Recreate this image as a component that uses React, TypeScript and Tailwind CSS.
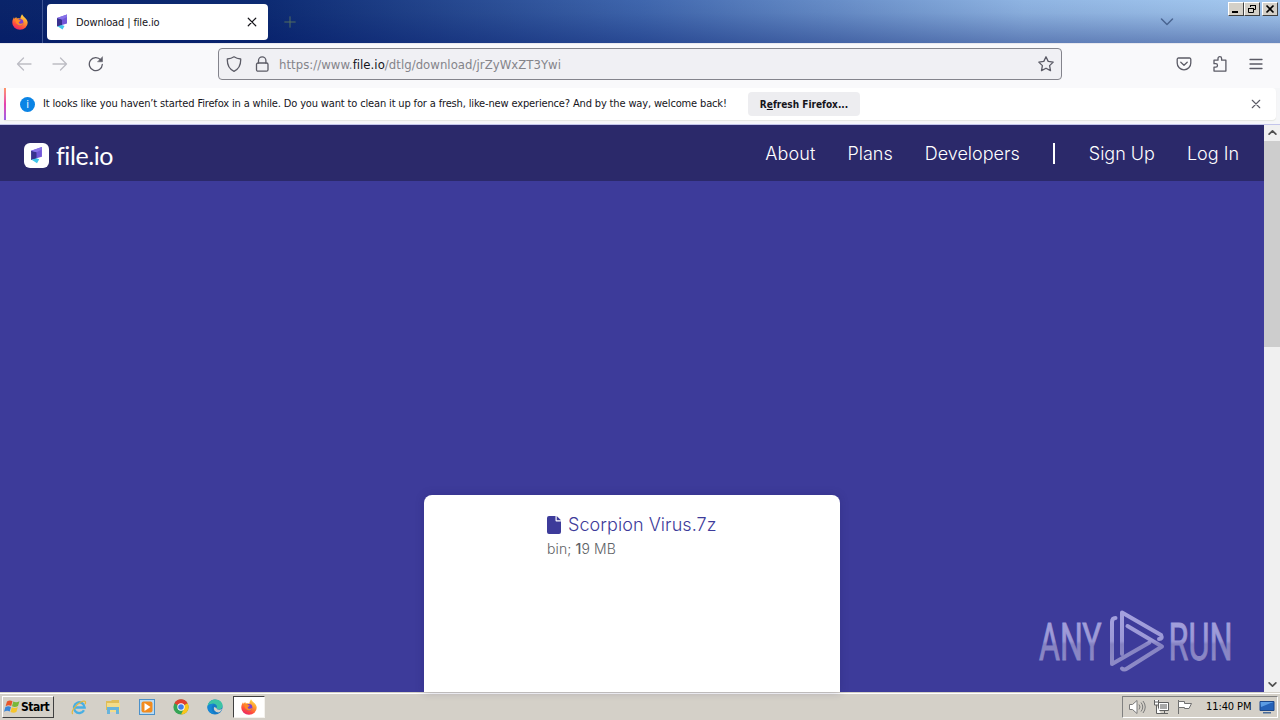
import type { ReactNode } from "react";

function FirefoxIcon({ size = 16 }: { size?: number }) {
  return (
    <svg width={size} height={size} viewBox="0 0 16 16">
      <defs>
        <linearGradient id="fox" x1="0.8" y1="0" x2="0.3" y2="1">
          <stop offset="0" stopColor="#ffe14d" />
          <stop offset="0.4" stopColor="#ff9a2e" />
          <stop offset="0.75" stopColor="#ff4a3d" />
          <stop offset="1" stopColor="#e5246f" />
        </linearGradient>
      </defs>
      <path d="M10 .3c.8 1 1.2 2 2.4 3 1.800 1.400 3.300 3.300 3.300 5.500A7.700 7 0 0 1 8 15.800 7.700 7 0 0 1 .3 8.700C.3 6.500 1 4.800 2 3.300l.5 1.500L4.200 3l.6 1.500c1.200-.4 2.400-.4 3.400.2C8.500 3 9.200 1.600 10 .3z" fill="url(#fox)" />
      <circle cx="8" cy="8.400" r="3.300" fill="#7a3fd0" />
      <path d="M3.500 5.500c1.300-.8 2.800-.6 3.800.5l1.500.4c-.3.900-1.500 1-2 1.500-.2 1 .7 1.900 2 1.800 1-.1 1.700-.6 2.500-.2-.9 1.700-2.700 2.300-4.300 1.900C4.500 10.800 3.200 8.300 3.500 5.500z" fill="#ff8a25" />
    </svg>
  );
}

function FileMark({ className }: { className: string }) {
  return (
    <svg className={className} viewBox="0 0 12 16">
      <path d="M1 4 11 .5V9.500L6 11z" fill="#7257d8" />
      <path d="M1 4 6 5.500v6L1 12.500z" fill="#39328f" />
      <path d="M1 4 11 .5V3L6 5.500z" fill="#8672e8" />
      <path d="M1.500 12.300 6 11l2.500 1L6.500 15.500z" fill="#3fc6ea" />
    </svg>
  );
}

function LineIcon({ children, className = "size-4 text-[#5b5b66]" }: { children: ReactNode; className?: string }) {
  return (
    <svg className={className} viewBox="0 0 16 16" fill="none" stroke="currentColor" strokeWidth="1.3" strokeLinecap="round" strokeLinejoin="round">
      {children}
    </svg>
  );
}

function WindowButton({ children }: { children: ReactNode }) {
  return (
    <div className="flex h-[14px] w-4 items-center justify-center border border-t-white border-r-[#404040] border-b-[#404040] border-l-white bg-[#d4d0c8]">
      <svg width="12" height="10" viewBox="0 0 12 10" fill="none" stroke="#000">
        {children}
      </svg>
    </div>
  );
}

function TabStrip() {
  return (
    <div className="flex h-[43px] bg-[linear-gradient(to_bottom,rgba(0,0,0,0)_0%,rgba(0,20,80,0.05)_30%,rgba(0,20,100,0.35)_100%),linear-gradient(to_right,#0a246a_0%,#0d2b73_21%,#3f66ad_50%,#8fb4e2_80%,#a6caf0_100%)]">
      <div className="flex w-[43px] items-center justify-center border-r border-[#3f5694] pr-[2px]">
        <FirefoxIcon />
      </div>
      <div className="mt-1 ml-1 flex h-9 w-[221px] items-center rounded bg-white pr-[11px] pl-[9px]">
        <FileMark className="h-4 w-3" />
        <span className="mt-[2px] ml-2 flex-1 text-[11px] tracking-[-0.13px] whitespace-nowrap text-[#15141a]">Download | file.io</span>
        <LineIcon className="size-[10px] text-[#15141a]">
          <path d="M2 2l12 12M14 2 2 14" strokeWidth="1.9" />
        </LineIcon>
      </div>
      <div className="flex flex-1 items-center pl-4">
        <LineIcon className="size-[12px] text-[#55705f]">
          <path d="M8 1v14M1 8h14" />
        </LineIcon>
      </div>
      <LineIcon className="mt-[14px] mr-[53px] size-4 text-[#4a6591]">
        <path d="M2.500 5 8 10.500 13.500 5" strokeWidth="1.500" />
      </LineIcon>
      <div className="mt-[2px] mr-[2px] flex">
        <WindowButton>
          <path d="M2 8h6" strokeWidth="2" />
        </WindowButton>
        <WindowButton>
          <path d="M4.500 3V1.500h5v4H8M4 1.500h6" />
          <path d="M2.500 4.500h5v4h-5zM2 4.500h6" />
        </WindowButton>
        <div className="ml-[2px]">
          <WindowButton>
            <path d="M2.500 1.500l7 7M9.500 1.500l-7 7" strokeWidth="1.700" />
          </WindowButton>
        </div>
      </div>
    </div>
  );
}

function Toolbar() {
  return (
    <div className="flex h-[45px] items-center border-t border-[#e8e8ee] bg-[#f9f9fb] pr-4 pb-1 pl-4">
      <LineIcon className="size-4 text-[#bdbdc4]">
        <path d="M15 8H1.500M7.500 2 1.500 8l6 6" />
      </LineIcon>
      <LineIcon className="ml-5 size-4 text-[#bdbdc4]">
        <path d="M1 8h13.500M8.500 2l6 6-6 6" />
      </LineIcon>
      <LineIcon className="ml-5 size-4 text-[#5b5b66]">
        <path d="M14.300 8.500A6.500 6.500 0 1 1 12.800 4" />
        <path d="M14.500 1v4.800H9.800z" fill="currentColor" strokeWidth="0.500" />
      </LineIcon>
      <div className="ml-[114px] flex h-8 w-[844px] items-center rounded border border-[#84848c] bg-[#f0f0f4] px-[7px]">
        <LineIcon>
          <path d="M8 .8c2 1.400 4.200 2 6.700 2.200C14.900 8.500 13.200 13 8 15.300 2.800 13 1.100 8.500 1.300 3 3.800 2.800 6 2.200 8 .8z" />
        </LineIcon>
        <LineIcon className="ml-3 size-4 text-[#5b5b66]">
          <rect x="2.500" y="7" width="11.500" height="8.200" rx="1.500" />
          <path d="M4.500 7V4.500a3.700 3.700 0 0 1 7.400 0V7" />
        </LineIcon>
        <span className="mt-px ml-[9px] flex-1 text-[13px] tracking-[0.04px] whitespace-nowrap text-[#84848a]">
          https://www.<span className="text-[#15141a]">file.io</span>/dtlg/download/jrZyWxZT3Ywi
        </span>
        <LineIcon>
          <path d="M8 .8l2.200 4.600 5 .7-3.600 3.500.9 5L8 12.200l-4.500 2.400.9-5L.8 6.100l5-.7z" />
        </LineIcon>
      </div>
      <div className="ml-auto flex gap-5">
        <LineIcon>
          <path d="M2.500 2h11a1.300 1.300 0 0 1 1.300 1.300V7A6.800 6.800 0 0 1 1.200 7V3.300A1.300 1.300 0 0 1 2.500 2zM4.800 6.300 8 9.200l3.200-2.900" />
        </LineIcon>
        <LineIcon>
          <path d="M2 4.200h4V2.500a1.800 1.800 0 0 1 3.600 0v1.700h4.300v10.900H2v-4h1.800a1.700 1.700 0 0 0 0-3.400H2z" />
        </LineIcon>
        <LineIcon>
          <path d="M2 3.500h12M2 8h12M2 12.500h12" />
        </LineIcon>
      </div>
    </div>
  );
}

function Notification() {
  return (
    <div className="h-[37px] border-b border-[#c3c5ea] bg-[#f5f6f8] pr-1 pl-1">
      <div className="flex h-8 items-center rounded-r bg-white shadow-[0_1px_1px_#e4e6e0]">
        <div className="h-8 w-[2px] bg-linear-to-b from-[#ff9565] via-[#e63fae] to-[#9a5ce8]" />
        <div className="ml-[14px] flex size-[15px] items-center justify-center rounded-full bg-[#0b84e5] text-[11px] leading-none text-white">i</div>
        <span className="ml-2 w-[705px] text-[11px] tracking-[-0.15px] whitespace-nowrap text-[#15141a]">
          It looks like you haven’t started Firefox in a while. Do you want to clean it up for a fresh, like-new experience? And by the way, welcome back!
        </span>
        <button className="flex h-6 w-28 items-center justify-center rounded bg-[#ededf0] text-[10px] font-bold whitespace-nowrap text-[#15141a]">
          R<span className="underline">e</span>fresh Firefox...
        </button>
        <LineIcon className="mr-[15px] ml-auto size-[10px] text-[#5b5b66]">
          <path d="M2 2l12 12M14 2 2 14" strokeWidth="1.800" />
        </LineIcon>
      </div>
    </div>
  );
}

function SiteHeader() {
  return (
    <header className="flex h-14 items-center bg-[#2b296a] pr-[25px] pl-6 text-white">
      <div className="mt-1 flex size-[25px] items-center justify-center rounded-[6px] bg-white">
        <FileMark className="h-[18px] w-[13px]" />
      </div>
      <span className="mt-[5px] ml-[7px] font-['Lato'] text-[25px] leading-none tracking-[-0.4px]">file.io</span>
      <nav className="ml-auto flex items-center font-['Inter'] text-[18px] font-light">
        <a className="tracking-[0.1px]">About</a>
        <a className="ml-8">Plans</a>
        <a className="ml-8">Developers</a>
        <span className="ml-[33px] h-[21px] w-[2px] bg-white" />
        <a className="ml-[34px]">Sign Up</a>
        <a className="ml-8">Log In</a>
      </nav>
    </header>
  );
}

function Watermark() {
  return (
    <svg className="absolute right-[14px] bottom-[15px] h-[72px] w-[215px]" viewBox="1035 605 215 72">
      <defs>
        <linearGradient id="mark" gradientUnits="userSpaceOnUse" x1="0" y1="610" x2="0" y2="672">
          <stop offset="0" stopColor="#a5a2df" />
          <stop offset="0.500" stopColor="#9b98d5" />
          <stop offset="0.550" stopColor="#8683c2" />
          <stop offset="1" stopColor="#8f8cc8" />
        </linearGradient>
        <linearGradient id="letters" gradientUnits="userSpaceOnUse" x1="0" y1="-50" x2="0" y2="12">
          <stop offset="0" stopColor="#a5a2df" />
          <stop offset="0.500" stopColor="#9b98d5" />
          <stop offset="0.550" stopColor="#8683c2" />
          <stop offset="1" stopColor="#8f8cc8" />
        </linearGradient>
      </defs>
      <g fill="url(#letters)" stroke="url(#letters)" strokeWidth="0.900" fontFamily="Roboto, sans-serif" fontSize="52">
        <text transform="translate(1039 660) scale(0.617 1)">ANY</text>
        <text transform="translate(1168.500 660) scale(0.622 1)">RUN</text>
      </g>
      <g fill="none" stroke="url(#mark)" strokeWidth="4" strokeLinecap="round" strokeLinejoin="round">
        <path d="M1115.500 618q-3.500 0-3.500 4v42l37.500-21.500" />
        <path d="M1122 654V612.500l39 22.500q2 4-2 4" />
        <path d="M1127.500 626l34.500 20.500L1127 668.500q-3 2-5 0" />
      </g>
    </svg>
  );
}

function Page() {
  return (
    <div className="flex h-[567px]">
      <div className="relative flex flex-1 flex-col bg-[#3d3b9a]">
        <SiteHeader />
        <main className="flex flex-1 items-end justify-center">
          <div className="flex h-[197px] w-[416px] justify-center rounded-t-lg bg-white pt-[17px] font-['Inter'] shadow-[0_0_8px_rgba(30,28,90,0.25)]">
            <div className="w-[170px]">
              <div className="flex items-center text-[18px] leading-[26px] text-[#3d3b9a]">
                <svg className="-mt-px h-[18px] w-[14px] shrink-0" viewBox="0 0 14 18" fill="currentColor">
                  <path d="M2 0h6.500v4.500a1 1 0 0 0 1 1H14V16a2 2 0 0 1-2 2H2a2 2 0 0 1-2-2V2a2 2 0 0 1 2-2z" />
                  <path d="M9.700 0 14 4.300H9.700z" />
                </svg>
                <span className="ml-[7px] font-light tracking-[0.06px] whitespace-nowrap">Scorpion Virus.7z</span>
              </div>
              <div className="text-[14px] leading-[22px] font-light tracking-[0.1px] text-[#606266]">
                bin; <span className="font-medium">1</span>9 MB
              </div>
            </div>
          </div>
        </main>
        <Watermark />
      </div>
      <div className="flex w-4 flex-col items-center bg-[#f0f0f0]">
        <LineIcon className="mt-[3px] mb-1 size-[9px] text-[#505050]">
          <path d="M2 11l6-6 6 6" strokeWidth="3" />
        </LineIcon>
        <div className="h-[206px] w-4 bg-[#cdcdcd]" />
        <LineIcon className="mt-auto mb-[3px] size-[9px] text-[#505050]">
          <path d="M2 5l6 6 6-6" strokeWidth="3" />
        </LineIcon>
      </div>
    </div>
  );
}

function WindowsFlag() {
  return (
    <svg width="17" height="16" viewBox="0 0 17 16">
      <path d="M3 2.500C5 1 7 1.200 8.500 2.200L7.200 7C5.500 6 3.700 6 1.600 7.200z" fill="#e8562a" />
      <path d="M9.300 2.500c2 1 4 1 6.200-.3L14 7c-2 1.200-4 1.200-6 .3z" fill="#79b83a" />
      <path d="M1.400 8C3.500 6.800 5.300 7 7 7.900L5.700 12.500C4 11.500 2.200 11.600 0 12.800z" fill="#3b86d8" />
      <path d="M7.800 8.200c2 1 4 .9 6-.2l-1.300 4.800c-2 1.200-4 1-6 .1z" fill="#f6c52c" />
    </svg>
  );
}

function ExplorerE() {
  return (
    <svg width="16" height="16" viewBox="0 0 17 17" fill="none">
      <path d="M13.800 12A5.700 5.700 0 1 1 14.500 9H4" stroke="#48afe3" strokeWidth="2.500" />
      <path d="M2 16c-3-1.500 3-10 9-13 3-1.500 5.500-1 4 2.500" stroke="#e5b83c" strokeWidth="1.300" />
    </svg>
  );
}

function FolderIcon() {
  return (
    <svg width="16" height="16" viewBox="0 0 16 16">
      <path d="M1 2h5l1-1h7v10H1z" fill="#dfbd58" />
      <path d="M2 4h13v9H2z" fill="#f3dc8a" />
      <path d="M2 8h12v7h-3v-4H5v4H2z" fill="#68b4dc" />
    </svg>
  );
}

function PlayerIcon() {
  return (
    <svg width="16" height="16" viewBox="0 0 16 16">
      <rect x=".5" y=".5" width="15" height="15" fill="#b9dbf4" stroke="#4b90c9" />
      <rect x="2.500" y="2.500" width="11" height="11" rx="2" fill="#f28b1e" />
      <path d="M5.500 4v8l6-4z" fill="#fff" />
    </svg>
  );
}

function ChromeIcon() {
  return (
    <svg width="16" height="16" viewBox="0 0 16 16">
      <circle cx="8" cy="8" r="7.600" fill="#35a455" />
      <path d="M8 8 1.400 4.200A7.600 7.600 0 0 1 14.600 4.200z" fill="#e0402f" />
      <path d="M8 8l6.600-3.800A7.600 7.600 0 0 1 8 15.600L11 9.500z" fill="#fbc51b" />
      <circle cx="8" cy="8" r="3.700" fill="#fff" />
      <circle cx="8" cy="8" r="2.800" fill="#3f7fe8" />
    </svg>
  );
}

function EdgeIcon() {
  return (
    <svg width="16" height="16" viewBox="0 0 16 16">
      <circle cx="8" cy="8" r="7.600" fill="#1679c5" />
      <path d="M.5 7.500C1 3 4.500.4 8.200.4c4.300 0 7.400 2.800 7.400 6 0 2.500-1.900 3.900-4 3.900-1.600 0-2.300-.6-2-1.200C10.800 7 9 4.700 6.200 4.700 3.500 4.700 1.300 6 .5 7.500z" fill="#3cc4a5" />
      <path d="M.5 7.500C2 5 5 4.500 7 5c-3 1.500-3.500 6.500.5 9.500C3 15.500.2 11.500.5 7.500z" fill="#1688d5" />
      <path d="M9.600 9c-.5 1.500 3 2.500 5.500.8-.5 1.400-1.400 2.700-2.600 3.500-4 .6-6.500-2.500-5.300-5.300z" fill="#d4d0c8" />
    </svg>
  );
}

function Taskbar() {
  return (
    <div className="flex h-7 items-center border-t border-[#d4d0c8] bg-[#d4d0c8] shadow-[inset_0_1px_0_#ffffff]">
      <button className="mt-px ml-[2px] flex h-[22px] w-[52px] items-center border border-t-white border-r-[#404040] border-b-[#404040] border-l-white pl-px text-[12px] font-bold tracking-[-0.5px] text-black">
        <WindowsFlag />
        Start
      </button>
      <div className="mt-px ml-[17px] flex items-center gap-[18px]">
        <ExplorerE />
        <FolderIcon />
        <PlayerIcon />
        <ChromeIcon />
        <EdgeIcon />
      </div>
      <div className="mt-px ml-[10px] flex h-[22px] w-8 items-center justify-center border border-t-[#404040] border-r-[#f4f2ee] border-b-[#f4f2ee] border-l-[#404040] bg-white">
        <FirefoxIcon />
      </div>
      <div className="mt-px mr-[2px] ml-auto flex h-[22px] w-[156px] items-center border border-t-[#808080] border-r-white border-b-white border-l-[#808080] pl-[6px]">
        <svg width="17" height="16" viewBox="0 0 17 16" fill="#fff" stroke="#7a7a7a">
          <path d="M.5 5.500h3L8 1.500v13l-4.500-4h-3z" />
          <path d="M10 5.500q2 2.500 0 5M12 3.500q3.500 4.500 0 9M14 2q4.500 6 0 12" fill="none" />
        </svg>
        <svg className="ml-[7px]" width="17" height="16" viewBox="0 0 17 16" fill="#fff" stroke="#606060">
          <path d="M5.500 3.500h10v8h-10zM8 14.500h7M11.500 11.500v3" />
          <path d="M7 5h7v5H7z" fill="#a8a8a8" stroke="none" />
          <path d="M1.500 1v5h4V1M3.500 6v8.500H8M1.500 3h4" />
        </svg>
        <svg className="ml-[7px]" width="16" height="16" viewBox="0 0 16 16" fill="#fff" stroke="#707070">
          <path d="M1.500 1v14" />
          <path d="M1.500 2.500h6v2h7l-2.500 5H7.500v-1h-6z" />
        </svg>
        <span className="mt-px ml-[13px] text-[11px] tracking-[-0.1px] whitespace-nowrap text-black">11:40 PM</span>
        <svg className="ml-auto mr-[2px]" width="16" height="16" viewBox="0 0 16 16">
          <path d="M1 2.500h14v9H1z" fill="#2562b8" stroke="#1c478a" />
          <path d="M1.500 3h13L2 8z" fill="#5b9ce4" />
          <path d="M4 13h8v1.500H4z" fill="#496b98" />
        </svg>
      </div>
    </div>
  );
}

export default function App() {
  return (
    <div className="h-[720px] w-[1280px] overflow-hidden font-['DejaVu_Sans_Condensed','DejaVu_Sans',sans-serif]">
      <TabStrip />
      <Toolbar />
      <Notification />
      <Page />
      <Taskbar />
    </div>
  );
}
